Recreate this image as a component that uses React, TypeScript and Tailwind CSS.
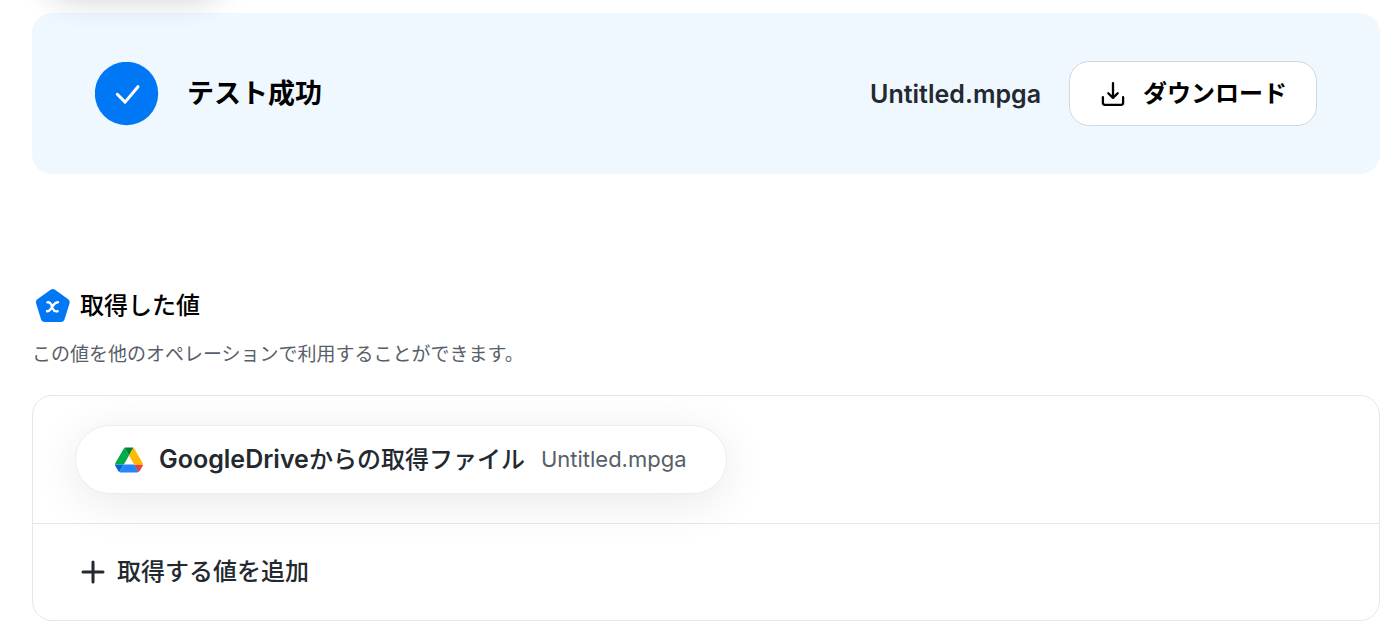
import React from "react";

function CheckIcon() {
  return (
    <svg className="h-16 w-16 shrink-0" viewBox="0 0 64 64" fill="none" aria-hidden="true">
      <circle cx="31.5" cy="31.5" r="31.7" fill="#0078f5" />
      <path d="M22.3 32.300 30.100 40.100 43 24.700" stroke="#fff" strokeWidth="3" strokeLinecap="round" strokeLinejoin="round" />
    </svg>
  );
}

function DownloadIcon() {
  return (
    <svg className="h-7 w-7 shrink-0" viewBox="0 0 28 28" fill="none" stroke="currentColor" strokeWidth="2.3" strokeLinecap="round" strokeLinejoin="round" aria-hidden="true">
      <path d="M14 3.2V17.6M9.3 13.2l4.7 4.7 4.7-4.7M3.900 17.200v5.600a2 2 0 0 0 2 2h16.200a2 2 0 0 0 2-2v-5.600" />
    </svg>
  );
}

function ValueIcon() {
  return (
    <svg className="h-10 w-10 shrink-0" viewBox="0 0 40 40" fill="none" aria-hidden="true">
      <path d="M18.3 3.9a4 4 0 0 1 5 0l12.6 9.2a4 4 0 0 1 1.5 4.6l-4.8 15.5a4 4 0 0 1-3.8 2.8H12.8A4 4 0 0 1 9 33.2L4.200 17.7a4 4 0 0 1 1.500-4.600Z" fill="#0078f5" />
      <path d="M15.400 16.400c1.900-.3 2.900.2 3.500 1.700l2.500 5.500c.6 1.500 1.800 2.100 4.200 1.700M26 16.200c-1.900-.1-2.900.7-3.900 2.100l-3.400 4.800c-1 1.500-2 2.200-3.700 2.200" stroke="#fff" strokeWidth="2.400" strokeLinecap="round" />
    </svg>
  );
}

function DriveIcon() {
  return (
    <svg className="h-7 w-7 shrink-0" viewBox="0 -4.500 87.300 87.300" aria-hidden="true">
      <path d="m6.600 66.850 3.850 6.650c.8 1.400 1.950 2.500 3.300 3.300l13.750-23.800H0c0 1.550.4 3.100 1.200 4.500z" fill="#0066da" />
      <path d="M43.650 25 29.900 1.200c-1.350.8-2.500 1.900-3.300 3.300L1.200 48.500A9.060 9.060 0 0 0 0 53h27.500z" fill="#00ac47" />
      <path d="M73.550 76.800c1.350-.8 2.500-1.900 3.300-3.300l1.600-2.750 7.650-13.250c.8-1.400 1.200-2.950 1.200-4.500H59.800l5.850 11.500z" fill="#ea4335" />
      <path d="M43.650 25 57.400 1.200C56.050.4 54.500 0 52.900 0H34.400c-1.600 0-3.150.45-4.500 1.200z" fill="#00832d" />
      <path d="M59.800 53H27.500L13.750 76.800c1.350.8 2.900 1.200 4.500 1.200h50.800c1.600 0 3.150-.45 4.500-1.200z" fill="#2684fc" />
      <path d="M73.400 26.500 60.700 4.500c-.8-1.400-1.950-2.500-3.300-3.300L43.650 25 59.800 53h27.450c0-1.550-.4-3.100-1.200-4.500z" fill="#ffba00" />
    </svg>
  );
}

function PlusIcon() {
  return (
    <svg className="h-6 w-6 shrink-0" viewBox="0 0 24 24" fill="none" stroke="currentColor" strokeWidth="3" strokeLinecap="round" aria-hidden="true">
      <path d="M12 2v20M2 12h20" />
    </svg>
  );
}

export default function App() {
  return (
    <main className="bg-white pr-[18px] pb-[10px] pl-8 font-['Inter','Noto_Sans_CJK_JP',sans-serif] text-2xl text-black">
      <div className="flex h-[13px] items-start" aria-hidden="true">
        <div className="-mt-[68px] ml-3 h-16 w-[180px] rounded-full shadow-[0_0_32px_2px_rgba(15,23,42,0.22)]" />
      </div>

      <section className="flex flex-wrap items-center justify-between gap-6 rounded-[20px] bg-[#eff7ff] px-[63px] py-12">
        <div className="flex items-center gap-7">
          <CheckIcon />
          <h1 className="text-[27px] leading-10 font-semibold">テスト成功</h1>
        </div>
        <div className="flex items-center gap-7">
          <span className="text-[25px] leading-8 font-semibold text-[#23292f]">Untitled.mpga</span>
          <button type="button" className="flex h-[65px] items-center gap-4 rounded-[20px] border border-[#d0d7de] bg-white px-[29px] font-semibold">
            <DownloadIcon />
            ダウンロード
          </button>
        </div>
      </section>

      <section className="pt-28">
        <div className="flex items-center gap-2">
          <ValueIcon />
          <h2 className="leading-10 font-medium">取得した値</h2>
        </div>
        <p className="pt-[13px] text-[19px] leading-8 text-[#57606a]">この値を他のオペレーションで利用することができます。</p>

        <div className="mt-6 rounded-[20px] border border-[#e5e7e9]">
          <div className="border-b border-[#e5e7e9] px-[42px] py-[29px]">
            <button type="button" className="flex min-h-[69px] max-w-full items-center gap-4 rounded-full border border-[#eaeef2] bg-white px-[39px] text-left shadow-[0_8px_48px_0_rgba(0,0,0,0.09)]">
              <DriveIcon />
              <span className="font-medium text-[#23292f]">
                <span className="text-[25px] font-semibold">GoogleDrive</span>からの取得ファイル
              </span>
              <span className="text-[22px] text-[#57606a]">Untitled.mpga</span>
            </button>
          </div>
          <button type="button" className="flex h-24 w-full items-center gap-3 rounded-b-[20px] px-12 font-medium text-[#23292f]">
            <PlusIcon />
            取得する値を追加
          </button>
        </div>
      </section>
    </main>
  );
}
